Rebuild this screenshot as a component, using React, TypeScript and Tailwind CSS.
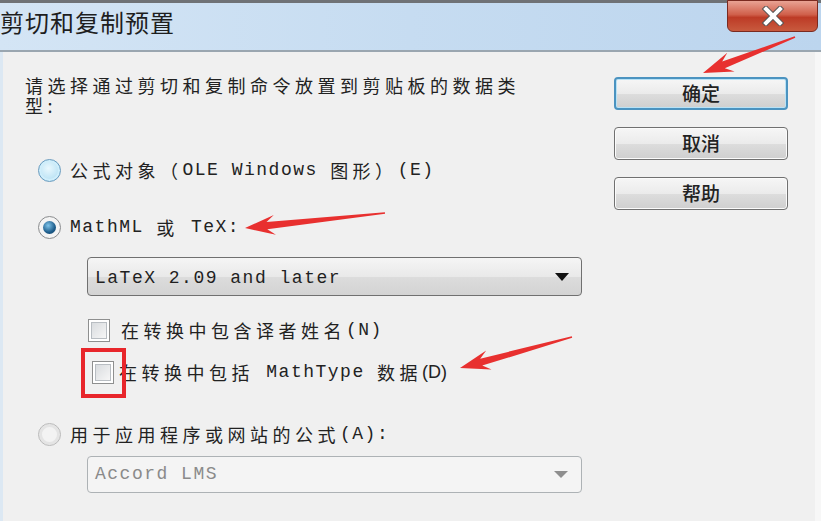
import React from "react";

const Cjk = ({ children, className = "" }: { children: React.ReactNode; className?: string }) => (
  <span className={"font-['Noto_Sans_CJK_SC',sans-serif] text-[18px] tracking-[4.5px] " + className}>{children}</span>
);

const Mono = ({ children, className = "" }: { children: React.ReactNode; className?: string }) => (
  <span className={"font-['Liberation_Mono',monospace] text-[18px] tracking-[1.5px] whitespace-pre " + className}>{children}</span>
);

const Radio = ({ state }: { state: "hover" | "checked" | "disabled" }) => {
  if (state === "hover")
    return (
      <span className="w-[23px] h-[23px] rounded-full border border-[#6a9cbf] bg-[radial-gradient(circle_at_45%_40%,#e9f8fe,#a6d9f0)] shadow-[inset_0_0_0_2px_#cfeefb]" />
    );
  if (state === "checked")
    return (
      <span className="w-[23px] h-[23px] rounded-full border border-[#8a8c8e] bg-[#f4f4f4] flex items-center justify-center">
        <span className="w-[13px] h-[13px] rounded-full bg-[radial-gradient(circle_at_40%_35%,#7fc4ea,#1d5c8a_60%,#0f3c60)]" />
      </span>
    );
  return (
    <span className="w-[23px] h-[23px] rounded-full border border-[#b9b9b9] bg-[#f3f3f3] shadow-[inset_0_0_0_3px_#e4e4e4]" />
  );
};

const Checkbox = () => (
  <span className="w-[22px] h-[23px] border border-[#8e8f8f] bg-white p-[2px] flex">
    <span className="flex-1 border border-[#b8bdc2] bg-[linear-gradient(135deg,#d9dcdf,#f6f6f6)]" />
  </span>
);

const Btn = ({ label, primary = false }: { label: string; primary?: boolean }) => (
  <div
    className={
      "w-[174px] h-[33px] rounded-[4px] flex items-center justify-center bg-[linear-gradient(#f6f6f6,#ebebeb_50%,#dddddd_51%,#cfcfcf)] " +
      (primary
        ? "border-2 border-[#4b93c0] shadow-[inset_0_0_0_1px_#b8e2f6]"
        : "border border-[#707070] shadow-[inset_0_0_0_1px_#fbfbfb]")
    }
  >
    <span className="font-['Noto_Sans_CJK_SC',sans-serif] text-[19px] text-[#222] font-medium">{label}</span>
  </div>
);

// red annotation arrow, tapered shaft + notched head
const arrowPoints = (tx: number, ty: number, px: number, py: number) => {
  const dx = px - tx;
  const dy = py - ty;
  const len = Math.hypot(dx, dy);
  const ux = dx / len;
  const uy = dy / len;
  const nx = uy;
  const ny = -ux;
  const p = (along: number, side: number) =>
    `${(px - ux * along + nx * side).toFixed(1)},${(py - uy * along + ny * side).toFixed(1)}`;
  return [
    p(len, 0.8),
    p(22, 3.6),
    p(30, 10),
    p(0, 0),
    p(30, -10),
    p(22, -3.6),
    p(len, -0.8),
  ].join(" ");
};

export default function App() {
  return (
    <div className="relative w-[821px] h-[521px] overflow-hidden bg-[#f0f0f0] flex flex-col">
      {/* title bar */}
      <div className="h-[50px] flex flex-col shrink-0">
        <div className="h-[3px] bg-[#6f7276]" />
        <div className="flex-1 flex items-start bg-[linear-gradient(90deg,#d4e5f5,#c6dcf1_50%,#bcd5ee)]">
          <span className="mt-[3px] font-['Noto_Sans_CJK_SC',sans-serif] text-[24px] leading-[32px] text-[#1e1e1e] tracking-[1px]">
            剪切和复制预置
          </span>
          <div className="ml-auto mr-[3px] -mt-[3px] w-[91px] h-[32px] rounded-b-[6px] border border-[#7a2a20] bg-[linear-gradient(#e9a394,#d0604b_45%,#bd3b26_55%,#c85a3e)] flex items-center justify-center">
            <svg width="24" height="20" viewBox="0 0 24 20">
              <path d="M5 3 L19 17 M19 3 L5 17" stroke="#555" strokeWidth="6" strokeLinecap="square" />
              <path d="M5 3 L19 17 M19 3 L5 17" stroke="#fff" strokeWidth="4" strokeLinecap="square" />
            </svg>
          </div>
        </div>
      </div>
      <div className="h-[2px] bg-[#9aa6b0]" />

      {/* body */}
      <div className="flex-1 flex border-l-[3px] border-l-[#dce8f3] border-r-[6px] border-r-[#f7f7f7]">
        <div className="flex-1 flex flex-col pl-[22px] pt-[24px] text-[#222]">
          <p className="w-[505px] font-['Noto_Sans_CJK_SC',sans-serif] text-[18px] tracking-[4.5px] leading-[19.5px]">
            请选择通过剪切和复制命令放置到剪贴板的数据类型:
          </p>

          <div className="mt-[43px] flex items-center ml-[13px] h-[24px]">
            <Radio state="hover" />
            <span className="ml-[9px] flex items-center">
              <Cjk>公式对象（</Cjk>
              <Mono>OLE Windows </Mono>
              <Cjk>图形）</Cjk>
              <Mono className="text-[17px] tracking-[0px]">(E)</Mono>
            </span>
          </div>

          <div className="mt-[33px] flex items-center ml-[13px] h-[24px]">
            <Radio state="checked" />
            <span className="ml-[9px] flex items-center">
              <Mono>MathML </Mono>
              <Cjk>或</Cjk>
              <Mono> TeX:</Mono>
            </span>
          </div>

          <div className="mt-[18px] ml-[62px] w-[495px] h-[39px] rounded-[4px] border border-[#707070] bg-[linear-gradient(#f5f5f5,#e9e9e9_50%,#dcdcdc_51%,#d3d3d3)] flex items-center pl-[7px] pr-[12px]">
            <Mono className="text-[#1f1f1f] mt-[3px]">LaTeX 2.09 and later</Mono>
            <span className="ml-auto w-0 h-0 border-l-[7px] border-r-[7px] border-t-[8px] border-l-transparent border-r-transparent border-t-[#111]" />
          </div>

          <div className="mt-[22px] ml-[63px] flex items-center h-[24px]">
            <Checkbox />
            <span className="ml-[11px] flex items-center">
              <Cjk className="tracking-[4.2px]">在转换中包含译者姓名</Cjk>
              <Mono className="text-[17px] tracking-[0px]">(N)</Mono>
            </span>
          </div>

          <div className="mt-[17px] ml-[56px] flex items-center">
            <div className="relative w-[45px] h-[50px] border-[4px] border-[#e8262b] -my-[13px] flex items-center justify-center">
              <span className="-ml-[2px]">
                <Checkbox />
              </span>
            </div>
            <span className="-ml-[7px] flex items-center">
              <Cjk className="tracking-[4.2px]">在转换中包括</Cjk>
              <Mono> MathType </Mono>
              <Cjk className="tracking-[2px]">数据</Cjk>
              <span className="font-['Liberation_Sans',sans-serif] text-[18px]">(D)</span>
            </span>
          </div>

          <div className="mt-[36px] flex items-center ml-[13px] h-[24px]">
            <Radio state="disabled" />
            <span className="ml-[9px] flex items-center">
              <Cjk>用于应用程序或网站的公式</Cjk>
              <Mono className="text-[17px] tracking-[0px]">(A):</Mono>
            </span>
          </div>

          <div className="mt-[10px] ml-[62px] w-[495px] h-[37px] rounded-[4px] border border-[#adb2b5] bg-[#f4f4f4] flex items-center pl-[7px] pr-[13px]">
            <Mono className="text-[#8a8a8a]">Accord LMS</Mono>
            <span className="ml-auto w-0 h-0 border-l-[7px] border-r-[7px] border-t-[7px] border-l-transparent border-r-transparent border-t-[#8e8e8e]" />
          </div>
        </div>

        <div className="w-[174px] mr-[27px] pt-[25px] flex flex-col gap-[17px]">
          <Btn label="确定" primary />
          <Btn label="取消" />
          <Btn label="帮助" />
        </div>
      </div>

      {/* annotation arrows */}
      <svg className="absolute inset-0 pointer-events-none" width="821" height="521">
        <polygon points={arrowPoints(795, 37, 703, 73)} fill="#e8302f" />
        <polygon points={arrowPoints(385, 213, 245, 228)} fill="#e8302f" />
        <polygon points={arrowPoints(572, 337, 460, 368)} fill="#e8302f" />
      </svg>
    </div>
  );
}
